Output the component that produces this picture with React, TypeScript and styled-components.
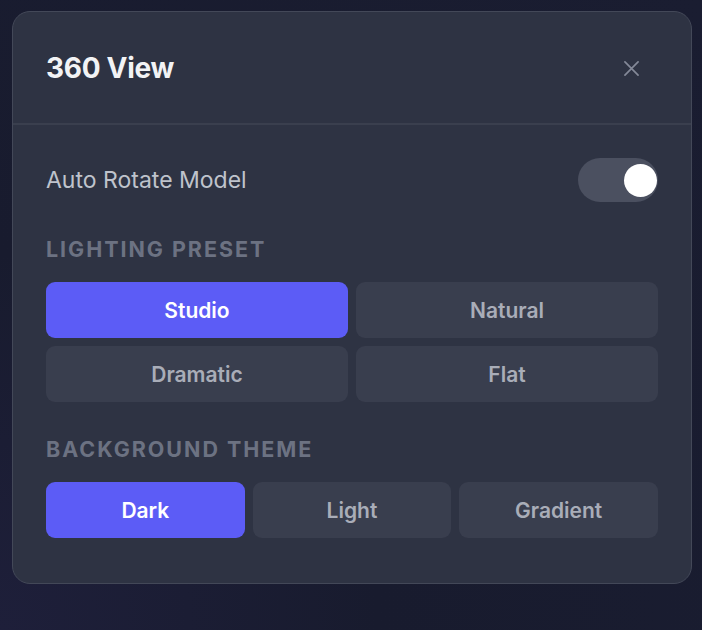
import React, { useState } from "react";
import styled, { createGlobalStyle } from "styled-components";

const GlobalStyle = createGlobalStyle`
  html, body {
    margin: 0;
    padding: 0;
    background: #1a1c30;
    font-family: Inter, "Noto Sans", sans-serif;
  }
`;

const Page = styled.div`
  width: 702px;
  height: 630px;
  padding: 11px 0 0 12px;
  box-sizing: border-box;
  background: radial-gradient(circle at 0% 100%, #1e1f3a 0%, #181b2e 40%, #1a1d31 100%);
`;

const Panel = styled.div`
  width: 680px;
  height: 573px;
  box-sizing: border-box;
  background: #2e3343;
  border: 1px solid #434858;
  border-radius: 18px;
  display: flex;
  flex-direction: column;
`;

const Header = styled.div`
  height: 110px;
  display: flex;
  align-items: center;
  justify-content: space-between;
  padding: 1px 42px 0 33px;
  border-bottom: 2px solid #3a3f4e;
`;

const Title = styled.h2`
  margin: 0;
  font-size: 28px;
  font-weight: 700;
  color: #f2f3f5;
  letter-spacing: -0.3px;
`;

const CloseButton = styled.button`
  width: 36px;
  height: 36px;
  border: none;
  background: transparent;
  display: flex;
  align-items: center;
  justify-content: center;
  cursor: pointer;
  padding: 0;
`;

const Body = styled.div`
  padding: 33px 33px 0 33px;
  display: flex;
  flex-direction: column;
`;

const ToggleRow = styled.div`
  display: flex;
  align-items: center;
  justify-content: space-between;
  height: 44px;
`;

const ToggleLabel = styled.span`
  font-size: 23px;
  color: #bfc3cc;
  margin-top: -1px;
`;

const Track = styled.button<{ $on: boolean }>`
  width: 80px;
  height: 44px;
  border-radius: 22px;
  border: none;
  padding: 0 6px;
  background: #4b5060;
  display: flex;
  align-items: center;
  justify-content: ${(p) => (p.$on ? "flex-end" : "flex-start")};
  cursor: pointer;
`;

const Knob = styled.span`
  width: 33px;
  height: 33px;
  border-radius: 50%;
  background: #ffffff;
  margin-right: -5px;
`;

const SectionLabel = styled.div`
  margin-top: 34px;
  font-size: 21.5px;
  font-weight: 700;
  letter-spacing: 1.95px;
  color: #6c7282;
  line-height: 26px;
`;

const Grid = styled.div<{ $cols: number }>`
  margin-top: 20px;
  display: grid;
  grid-template-columns: repeat(${(p) => p.$cols}, 1fr);
  gap: 8px;
`;

const Option = styled.button<{ $active: boolean }>`
  height: 56px;
  border: none;
  border-radius: 9px;
  font-family: inherit;
  font-size: 21px;
  font-weight: 600;
  cursor: pointer;
  background: ${(p) => (p.$active ? "#5c5cf6" : "#393e4e")};
  color: ${(p) => (p.$active ? "#ffffff" : "#a9adb8")};
`;

const lighting = ["Studio", "Natural", "Dramatic", "Flat"];
const themes = ["Dark", "Light", "Gradient"];

export default function App() {
  const [rotate, setRotate] = useState(true);
  const [light, setLight] = useState("Studio");
  const [theme, setTheme] = useState("Dark");

  return (
    <>
      <GlobalStyle />
      <Page>
        <Panel>
          <Header>
            <Title>360 View</Title>
            <CloseButton aria-label="Close">
              <svg width="15" height="15" viewBox="0 0 16 16" fill="none">
                <path d="M1 1L15 15M15 1L1 15" stroke="#848998" strokeWidth="1.8" strokeLinecap="round" />
              </svg>
            </CloseButton>
          </Header>
          <Body>
            <ToggleRow>
              <ToggleLabel>Auto Rotate Model</ToggleLabel>
              <Track $on={rotate} onClick={() => setRotate(!rotate)}>
                <Knob />
              </Track>
            </ToggleRow>

            <SectionLabel>LIGHTING PRESET</SectionLabel>
            <Grid $cols={2}>
              {lighting.map((l) => (
                <Option key={l} $active={light === l} onClick={() => setLight(l)}>
                  {l}
                </Option>
              ))}
            </Grid>

            <SectionLabel>BACKGROUND THEME</SectionLabel>
            <Grid $cols={3}>
              {themes.map((t) => (
                <Option key={t} $active={theme === t} onClick={() => setTheme(t)}>
                  {t}
                </Option>
              ))}
            </Grid>
          </Body>
        </Panel>
      </Page>
    </>
  );
}
